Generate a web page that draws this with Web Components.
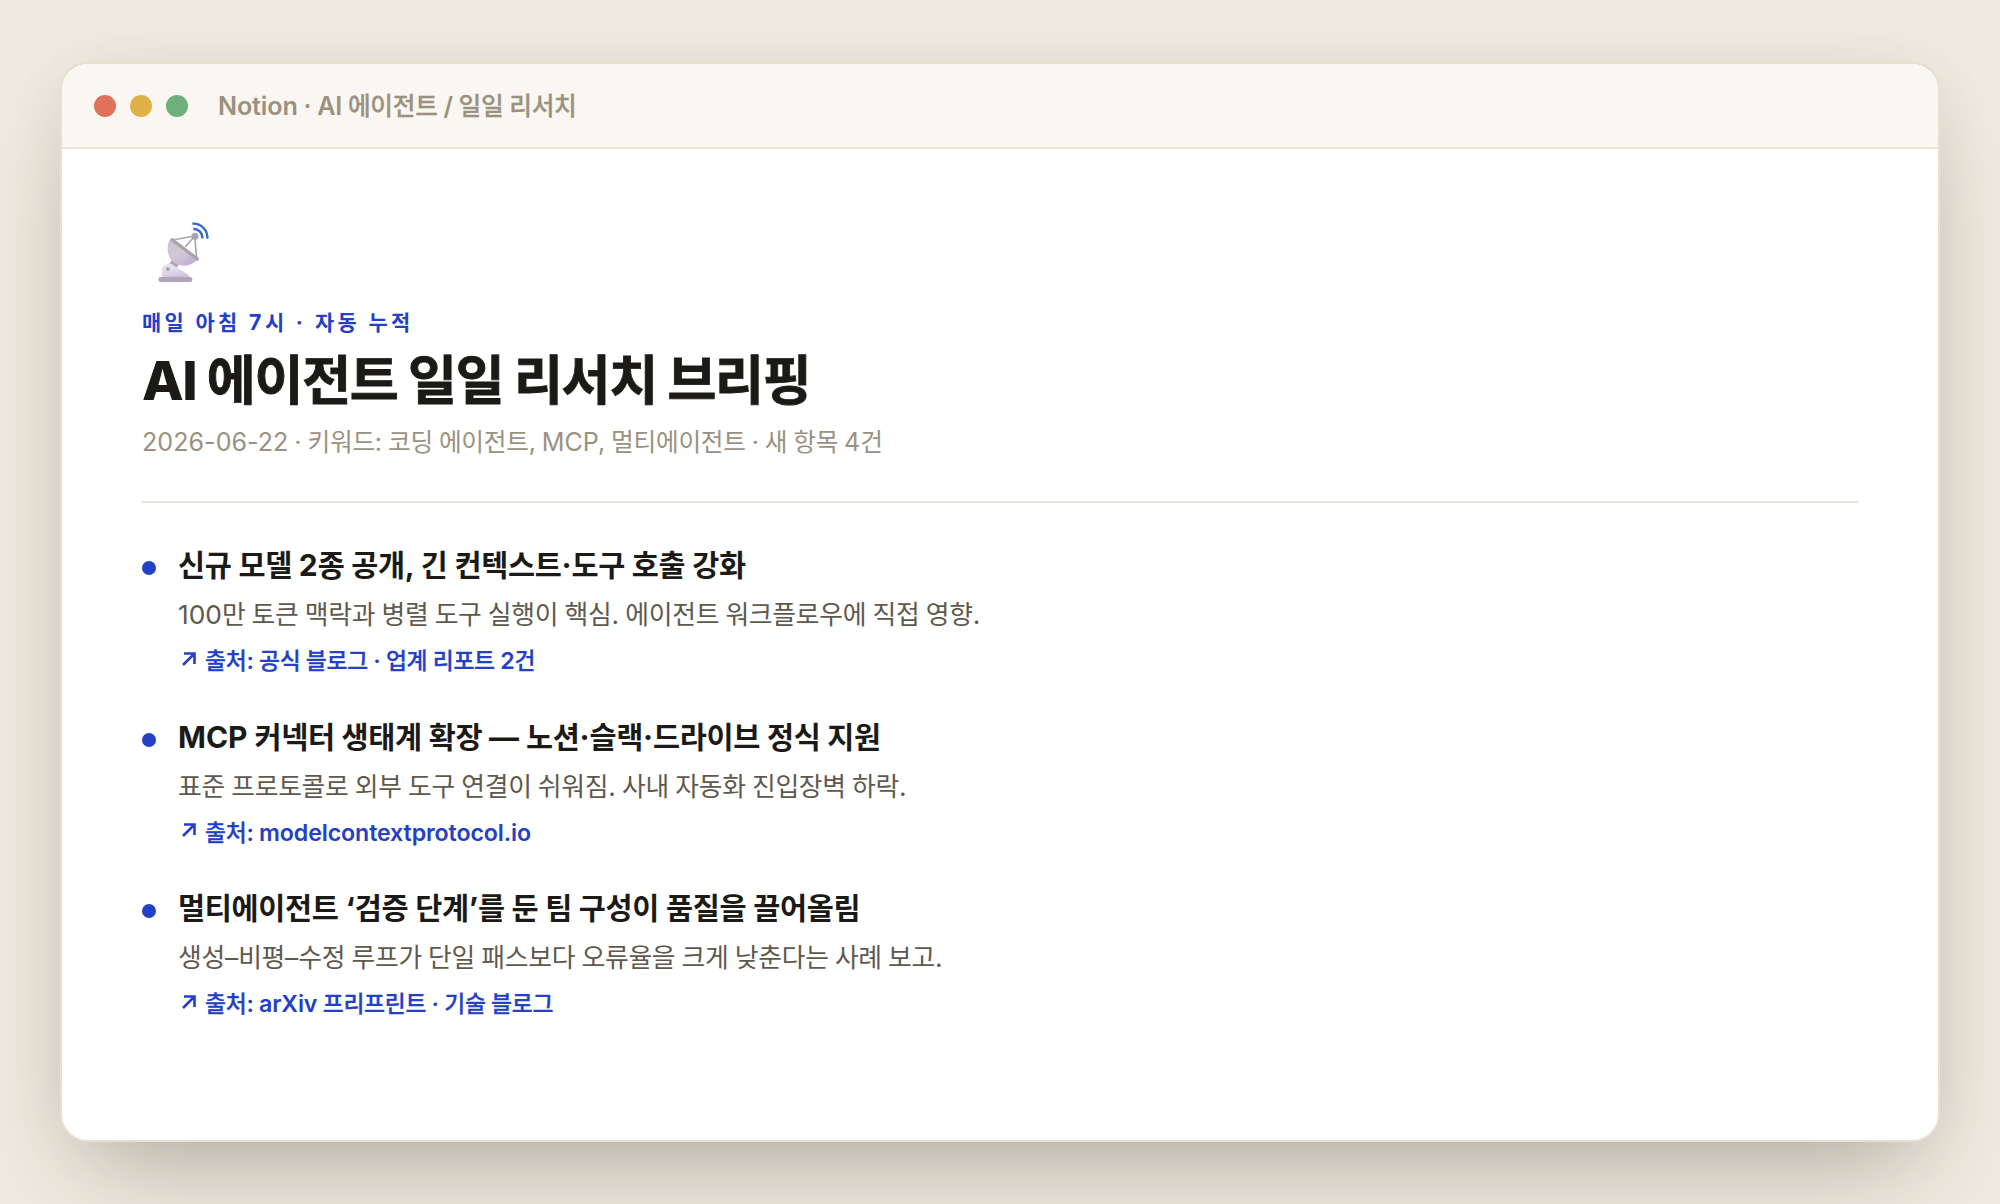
<!DOCTYPE html>
<html lang="ko">
<head>
<meta charset="utf-8">
<title>AI 에이전트 일일 리서치 브리핑</title>
<style>
html,body{margin:0;height:100%}
body{background:#efeadf;font-family:Inter,"Noto Sans CJK KR",sans-serif;box-sizing:border-box;padding:62px 60px;overflow:hidden}
</style>
</head>
<body>
<app-window>
  <mixed-text slot="title" class="semi">Notion · AI 에이전트 / 일일 리서치</mixed-text>
  <brief-header>
    <mixed-text slot="eyebrow" class="bold">매일 아침 7시 · 자동 누적</mixed-text>
    <mixed-text slot="title" class="heavy">AI 에이전트 일일 리서치 브리핑</mixed-text>
    <mixed-text slot="meta">2026-06-22 · 키워드: 코딩 에이전트, MCP, 멀티에이전트 · 새 항목 4건</mixed-text>
  </brief-header>
  <brief-item>
    <mixed-text slot="title" class="bold">신규 모델 2종 공개, 긴 컨텍스트·도구 호출 강화</mixed-text>
    <mixed-text slot="desc">100만 토큰 맥락과 병렬 도구 실행이 핵심. 에이전트 워크플로우에 직접 영향.</mixed-text>
    <mixed-text slot="source" class="semi">출처: 공식 블로그 · 업계 리포트 2건</mixed-text>
  </brief-item>
  <brief-item>
    <mixed-text slot="title" class="bold">MCP 커넥터 생태계 확장 — 노션·슬랙·드라이브 정식 지원</mixed-text>
    <mixed-text slot="desc">표준 프로토콜로 외부 도구 연결이 쉬워짐. 사내 자동화 진입장벽 하락.</mixed-text>
    <mixed-text slot="source" class="semi">출처: modelcontextprotocol.io</mixed-text>
  </brief-item>
  <brief-item>
    <mixed-text slot="title" class="bold">멀티에이전트 ‘검증 단계’를 둔 팀 구성이 품질을 끌어올림</mixed-text>
    <mixed-text slot="desc">생성–비평–수정 루프가 단일 패스보다 오류율을 크게 낮춘다는 사례 보고.</mixed-text>
    <mixed-text slot="source" class="semi">출처: arXiv 프리프린트 · 기술 블로그</mixed-text>
  </brief-item>
</app-window>
<script>
const define = (name, html, setup) => {
  const tpl = document.createElement('template');
  tpl.innerHTML = html;
  customElements.define(name, class extends HTMLElement {
    constructor() {
      super();
      this.attachShadow({mode: 'open'}).append(tpl.content.cloneNode(true));
    }
    connectedCallback() { if (setup) setup(this); }
  });
};

// One line of text: Hangul runs and Latin runs each get their own face and metrics.
define('mixed-text', `<style>
:host{display:block;white-space:pre}
.k{font-family:"Noto Sans CJK KR",sans-serif;font-size:.95em;letter-spacing:calc(-.011em + var(--track,0em))}
.l{font-family:Inter,"Noto Sans CJK KR",sans-serif;font-size:.967em;letter-spacing:var(--track,0em);word-spacing:-.045em}
:host(.semi) .k{font-weight:500;-webkit-text-stroke:.012em currentColor}
:host(.semi) .l{letter-spacing:-.005em;word-spacing:-.018em}
:host(.bold) .l{word-spacing:-.008em}
:host(.heavy) .k{font-weight:700;-webkit-text-stroke:.016em currentColor;letter-spacing:-.024em}
:host(.heavy) .l{letter-spacing:-.026em;word-spacing:.002em}
</style><span id="line"></span>`, el => {
  const line = el.shadowRoot.getElementById('line');
  line.textContent = '';
  for (const run of el.textContent.trim().match(/[가-힣]+|[^가-힣]+/g)) {
    const s = document.createElement('span');
    s.className = /[가-힣]/.test(run) ? 'k' : 'l';
    s.textContent = run;
    line.append(s);
  }
});

define('window-dots', `<style>
:host{display:flex;gap:14px}
i{width:22px;height:22px;border-radius:50%}
</style><i style="background:#e0715a"></i><i style="background:#e1b149"></i><i style="background:#6eb07b"></i>`);

define('app-window', `<style>
:host{display:flex;flex-direction:column;box-sizing:border-box;height:1080px;border:2px solid #e6e0d1;border-radius:28px;background:#fff;overflow:hidden;box-shadow:0 48px 96px -32px rgba(40,36,26,.31),0 4px 60px rgba(40,36,26,.055)}
header{display:flex;align-items:center;gap:30px;height:83px;padding:0 32px;background:#faf7f2;border-bottom:2px solid #ece7da;color:#9a9180;font-size:26px;font-weight:600;line-height:40px}
slot[name=title]{display:block;margin-top:-2px}
main{padding:67px 80px 0}
</style><header><window-dots></window-dots><slot name="title"></slot></header><main><slot></slot></main>`);

define('dish-icon', `<style>
:host{display:block;width:80px;height:70px}
svg{display:block}
</style><svg width="80" height="70" viewBox="36 48 240 210">
<defs>
<linearGradient id="bowl" x1="0" y1="0" x2=".6" y2="1"><stop offset="0" stop-color="#c6c2c8"/><stop offset=".55" stop-color="#d3cbd7"/><stop offset="1" stop-color="#c6b0d4"/></linearGradient>
<linearGradient id="base" x1="0" y1="0" x2=".3" y2="1"><stop offset="0" stop-color="#ece8f1"/><stop offset=".6" stop-color="#e0d9e8"/><stop offset="1" stop-color="#d0bfdd"/></linearGradient>
<linearGradient id="foot" x1="0" y1="0" x2="0" y2="1"><stop offset="0" stop-color="#aca6af"/><stop offset="1" stop-color="#b5a2c4"/></linearGradient>
</defs>
<path d="M117 193L127 177L149 188L140 204Z" fill="#aaa2b0"/>
<path d="M96 234V207Q96 200 102 197L113 191Q119 188 125 192L171 221Q179 226 180 234Z" fill="url(#base)"/>
<circle cx="114" cy="208" r="6" fill="#b4acbd"/><circle cx="112" cy="206" r="3" fill="#968ea2"/>
<rect x="85" y="231" width="102" height="15" rx="7" fill="url(#foot)"/>
<path d="M120 119C108 139 111 170 129 187C151 204 188 199 203 178Z" fill="url(#bowl)"/>
<path d="M128 120L194 108L166 141M194 108L200 174" fill="none" stroke="#aaa6ac" stroke-width="5" stroke-linejoin="round"/>
<path d="M126 119L202 177" stroke="#a8a4aa" stroke-width="10" stroke-linecap="round"/>
<circle cx="195" cy="109" r="10.500" fill="#a8a4ab"/>
<path d="M190 87A26 26 0 0 1 217 115M187 71A42 42 0 0 1 232 116" fill="none" stroke="#3367c9" stroke-width="7"/>
</svg>`);

define('brief-header', `<style>
:host{display:block;border-bottom:2px solid #e8e4d8;height:285px}
.e{--track:.168em;margin-top:17px;font-size:22px;line-height:36px;font-weight:700;color:#2340c6}
.t{margin-top:-1px;font-size:56px;line-height:76px;font-weight:800;color:#1b1a17}
.m{margin-top:1px;font-size:26px;line-height:40px;color:#9a9180}
</style><dish-icon></dish-icon>
<div class="e"><slot name="eyebrow"></slot></div>
<div class="t"><slot name="title"></slot></div>
<div class="m"><slot name="meta"></slot></div>`);

define('brief-item', `<style>
:host{display:flex;gap:22px;margin-top:40px;height:131.5px}
.dot{flex:none;width:14px;height:14px;border-radius:50%;background:#2340c6;margin-top:18px}
.t{margin-top:-2px;font-size:31px;line-height:44px;font-weight:700;color:#1b1a17}
.d{margin-top:4px;font-size:27.2px;line-height:44px;color:#5f594d}
.s{display:flex;align-items:center;gap:9px;margin-top:3px;font-size:24px;line-height:40px;font-weight:600;color:#2340c6}
svg{display:block;margin:-4px 0 0 4px}
</style><span class="dot"></span><div>
<div class="t"><slot name="title"></slot></div>
<div class="d"><slot name="desc"></slot></div>
<div class="s"><svg width="14" height="14" viewBox="0 0 14 14" fill="none" stroke="currentColor" stroke-width="2.600"><path d="M1 13L12.500 1.500M2 1.500H12.500V12"/></svg><slot name="source"></slot></div>
</div>`);
</script>
</body>
</html>
